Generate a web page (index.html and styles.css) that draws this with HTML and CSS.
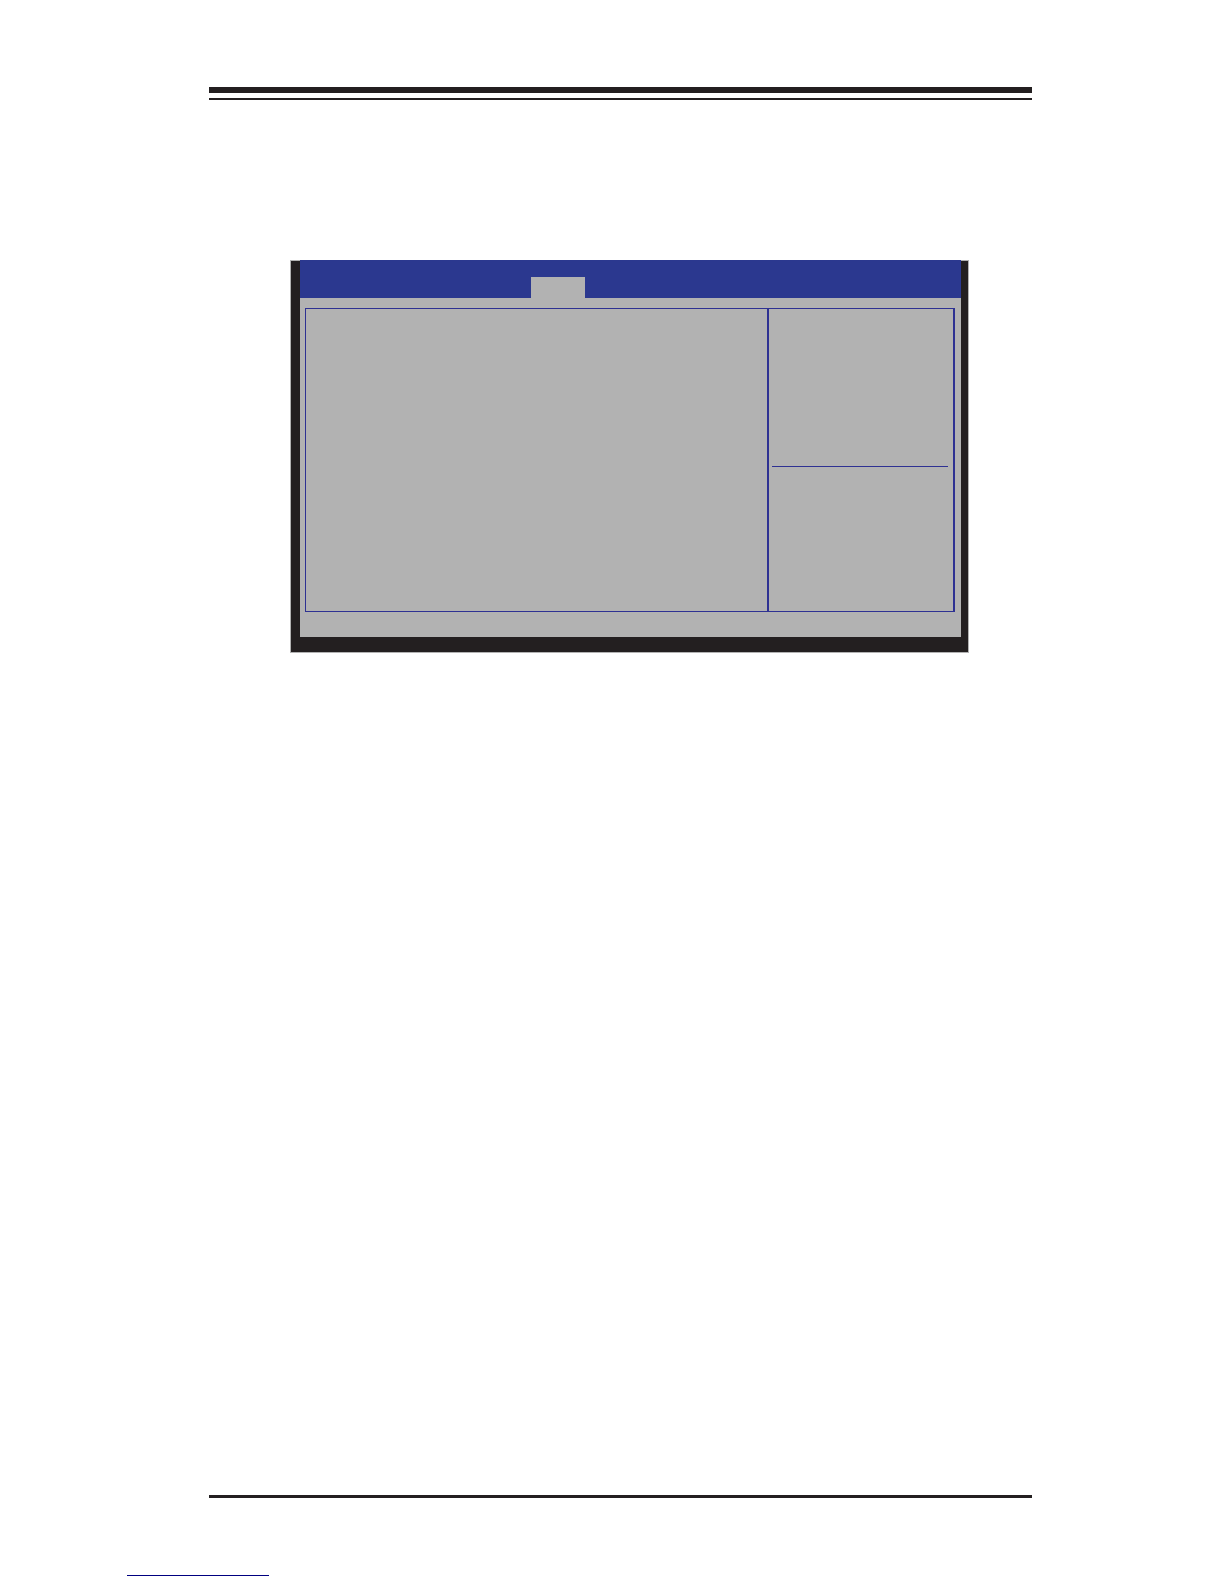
FILE: index.html
```html
<!DOCTYPE html>
<html lang="en">
<head>
<meta charset="UTF-8">
<meta name="viewport" content="width=device-width, initial-scale=1.0">
<title>BIOS Setup</title>
<link rel="stylesheet" href="styles.css">
</head>
<body>

<div class="sheet">
    <header class="top-rule"></header>

    <main class="setup">
        <nav class="menu-bar">
            <button class="tab" type="button" aria-label="Current tab"></button>
        </nav>
        <div class="screen">
            <div class="panels">
                <section class="options"></section>
                <aside class="side">
                    <div class="help"></div>
                    <div class="keys"></div>
                </aside>
            </div>
        </div>
    </main>

    <footer class="bottom-rule"></footer>
</div>

<a class="source-link" href="#" aria-label="Back to top"></a>

</body>
</html>
```

FILE: styles.css
```css
* { box-sizing: border-box; }

body { font-family: "Liberation Sans", Arial, sans-serif; background-color: #fff; margin: 0; min-height: 100vh; display: flex; flex-direction: column; }

/* page rules */
.sheet { flex: 1; display: flex; flex-direction: column; padding: 87px 192px 0 209px; }
.top-rule { height: 13px; border-top: 6px solid #231f20; border-bottom: 2px solid #231f20; }
.bottom-rule { margin-top: auto; border-top: 3px solid #231f20; }

/* setup window */
.setup { margin: 160px 63px 0 81px; padding: 0 7px 15px 9px; background-color: #231f20; border: 1px solid #b2b2b2; }
.menu-bar { display: flex; margin-top: -1px; padding: 17px 0 0 231px; background-color: #2b388f; }
.tab { width: 54px; height: 21px; padding: 0; border: none; background-color: #b2b2b2; cursor: pointer; }
.screen { padding: 10px 6px 25px 5px; background-color: #b2b2b2; }

.panels { display: flex; min-height: 304px; border: 1px solid #2e3192; border-right-width: 2px; }
.options { flex: 1; }
.side { width: 186px; border-left: 2px solid #2e3192; padding: 0 5px 0 3px; display: flex; flex-direction: column; }
.help { height: 158px; border-bottom: 1px solid #2e3192; }
.keys { flex: 1; }

.source-link { width: 142px; height: 16px; margin: 62px 0 8px 127px; border-bottom: 1px solid #000080; }
```
